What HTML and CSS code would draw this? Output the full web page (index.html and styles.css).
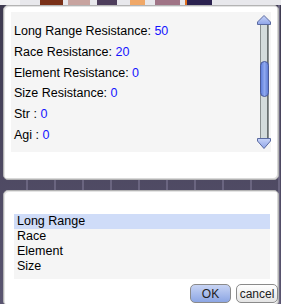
FILE: index.html
```html
<!DOCTYPE html>
<html lang="en">
<head>
    <meta charset="UTF-8">
    <title>Resistance</title>
    <link rel="stylesheet" href="styles.css">
</head>
<body>
    <div class="icons">
        <span class="ic ic1"></span>
        <span class="ic ic2"></span>
        <span class="ic ic3"></span>
        <span class="ic ic4"></span>
        <span class="ic ic5"></span>
        <span class="ic ic6"></span>
        <span class="ic ic7"></span>
    </div>

    <div class="window info">
        <div class="panel">
            <div class="stats">
                <div class="row">Long Range Resistance: <span class="num">50</span></div>
                <div class="row">Race Resistance: <span class="num">20</span></div>
                <div class="row">Element Resistance: <span class="num">0</span></div>
                <div class="row">Size Resistance: <span class="num">0</span></div>
                <div class="row">Str : <span class="num">0</span></div>
                <div class="row">Agi : <span class="num">0</span></div>
            </div>
            <svg class="scrollbar" width="14" height="134" viewBox="0 0 14 134">
                <defs>
                    <linearGradient id="arrow" x1="0" y1="0" x2="0" y2="1">
                        <stop offset="0" stop-color="#c8d4f8"/>
                        <stop offset="1" stop-color="#8ea4e8"/>
                    </linearGradient>
                    <linearGradient id="thumb" x1="0" y1="0" x2="1" y2="0">
                        <stop offset="0" stop-color="#5a7ad8"/>
                        <stop offset="0.5" stop-color="#8ea8f0"/>
                        <stop offset="1" stop-color="#5a78d0"/>
                    </linearGradient>
                </defs>
                <!-- track -->
                <rect x="3.5" y="9" width="8" height="116" fill="#d4dcdc" stroke="#8a9090"/>
                <line x1="10.5" y1="9" x2="10.5" y2="125" stroke="#6a7070"/>
                <!-- thumb -->
                <rect x="3.5" y="46.5" width="8" height="35" rx="4" fill="url(#thumb)" stroke="#4a5a98"/>
                <!-- up arrow -->
                <path d="M7 0.5 L13.5 7 L13.5 9.5 L0.5 9.5 L0.5 7 Z" fill="url(#arrow)" stroke="#5a6aa0"/>
                <!-- down arrow -->
                <path d="M0.5 123.5 L13.5 123.5 L13.5 126 L7 133.5 L0.5 126 Z" fill="url(#arrow)" stroke="#5a6aa0"/>
            </svg>
        </div>
    </div>

    <div class="window choose">
        <ul class="list">
            <li class="selected">Long Range</li>
            <li>Race</li>
            <li>Element</li>
            <li>Size</li>
        </ul>
        <div class="buttons">
            <button class="btn ok">OK</button>
            <button class="btn cancel">cancel</button>
        </div>
    </div>
</body>
</html>
```

FILE: styles.css
```css
body {
    margin: 0;
    width: 281px;
    height: 304px;
    overflow: hidden;
    background-color: #4c4760;
    background-image:
        repeating-linear-gradient(90deg, transparent 0 26px, #6a6580 26px 28px),
        linear-gradient(180deg, #3e3a50, #5a5570);
    font-family: "Liberation Sans", Arial, sans-serif;
    font-size: 12.5px;
    color: #000;
}
.icons {
    height: 5px;
    display: flex;
    background-color: #e8e8ec;
}
.ic {
    height: 5px;
}
.ic1 { width: 20px; background-color: #f2f2f4; }
.ic2 { width: 23px; margin-left: 20px; background-color: #7a3018; }
.ic3 { width: 22px; margin-left: 5px; background-color: #c8a4a0; }
.ic4 { width: 20px; margin-left: 7px; background-color: #4e3e5c; }
.ic5 { width: 15px; margin-left: 13px; background-color: #f0a868; }
.ic6 { width: 25px; margin-left: 10px; background-color: #a07486; }
.ic7 { width: 25px; margin-left: 5px; background-color: #2c2250; border-left: 2px solid #e07020; }

.window {
    margin-left: 3px;
    width: 274px;
    background-color: #fff;
    border: 1px solid #b4b4b4;
    border-radius: 5px;
    box-shadow: inset 1px 1px 0 #e4e4e4, inset -1px -1px 0 #d8d8d8;
}
.info {
    height: 173px;
}
.choose {
    margin-top: 10px;
    height: 114px;
}

.panel {
    margin: 6px 0 0 7px;
    width: 260px;
    height: 140px;
    background-color: #f5f5f5;
    display: flex;
    justify-content: space-between;
    align-items: flex-start;
}
.stats {
    padding: 9px 0 0 3px;
}
.row {
    line-height: 20.8px;
    white-space: nowrap;
}
.num {
    color: #1414ff;
}
.scrollbar {
    display: block;
    margin-top: 3px;
}

.list {
    list-style: none;
    margin: 23px 0 0 10px;
    padding: 0 0 5px 0;
    width: 256px;
    background-color: #f5f5f5;
}
.list li {
    height: 15px;
    line-height: 15px;
    padding-left: 3px;
}
.list .selected {
    background-color: #cfdcf8;
}

.buttons {
    display: flex;
    justify-content: flex-end;
    margin-top: 5px;
    padding-right: 0;
}
.btn {
    height: 19px;
    padding: 0;
    font-family: "Liberation Sans", Arial, sans-serif;
    font-size: 12px;
    color: #222;
    border: 1px solid #8a8a8a;
    border-radius: 5px;
}
.ok {
    width: 41px;
    background: linear-gradient(180deg, #c8d4f4, #8ca6e4);
}
.cancel {
    width: 42px;
    margin-left: 5px;
    background: linear-gradient(180deg, #ffffff, #e4e4e4);
}
```
